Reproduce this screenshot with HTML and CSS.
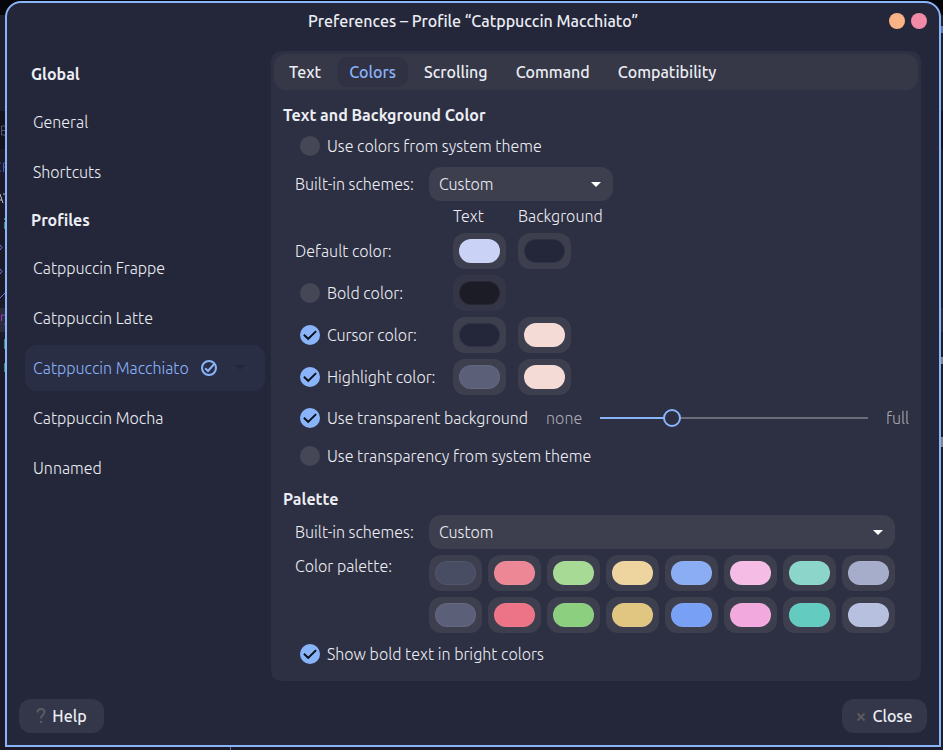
FILE: index.html
```html
<!DOCTYPE html>
<html lang="en">
<head>
<meta charset="utf-8">
<meta name="viewport" content="width=device-width, initial-scale=1">
<title>Preferences</title>
<link rel="stylesheet" href="styles.css">
</head>
<body>
<div class="desktop" aria-hidden="true">
  <span class="strip strip-top"></span>
  <span class="strip strip-bar"></span>
  <span class="strip strip-dark"></span>
  <span class="strip strip-row"></span>
  <svg class="bits" viewBox="0 0 5 280">
    <path d="M5 16H1.500v9H5M1.500 20.500H5" stroke="#55566a"/>
    <path d="M0 53h1m-1 8h1M3.500 62v-9H5M3 57h2" stroke="#4360b4"/>
    <path d="m0 84 3 9m-3-3h2M3 84h2" stroke="#b9bccb"/>
    <path d="M4.500 108v2m0 2v7M4.500 229v10m0 14v9" stroke="#2f8f78"/>
    <path d="m0 135 2 2.500L0 140m0 19 2 2.500L0 164M0 188l5-5" stroke="#6a80c8"/>
    <path d="M1.500 211v-6H5m-1 9h1" stroke="#a03aac"/>
  </svg>
  <span class="tick tick-foot"></span>
  <span class="tick tick-top"></span>
  <span class="tick tick-mid"></span>
  <span class="tick tick-right"></span>
</div>
<main class="window">
  <header class="titlebar">
    <h1 class="title">Preferences – Profile “Catppuccin Macchiato”</h1>
    <div class="controls">
      <button class="dot dot-min" type="button" aria-label="Minimize"></button>
      <button class="dot dot-close" type="button" aria-label="Close window"></button>
    </div>
  </header>

  <div class="body">
    <nav class="sidebar">
      <h2 class="side-heading">Global</h2>
      <a class="side-item" href="#general">General</a>
      <a class="side-item" href="#shortcuts">Shortcuts</a>
      <h2 class="side-heading">Profiles</h2>
      <a class="side-item" href="#frappe">Catppuccin Frappe</a>
      <a class="side-item" href="#latte">Catppuccin Latte</a>
      <a class="side-item selected" href="#macchiato">Catppuccin Macchiato
        <svg class="default-mark" viewBox="0 0 16 16"><circle cx="8" cy="8" r="7"/><path d="M4.2 8.2 7 11l6.2-7"/></svg>
        <svg class="more" viewBox="0 0 10 6"><path d="M0 0h10L5 5z"/></svg>
      </a>
      <a class="side-item" href="#mocha">Catppuccin Mocha</a>
      <a class="side-item" href="#unnamed">Unnamed</a>
    </nav>

    <section class="panel">
      <div class="tabs" role="tablist">
        <button class="tab" role="tab" type="button">Text</button>
        <button class="tab active" role="tab" type="button" aria-selected="true">Colors</button>
        <button class="tab" role="tab" type="button">Scrolling</button>
        <button class="tab" role="tab" type="button">Command</button>
        <button class="tab" role="tab" type="button">Compatibility</button>
      </div>

      <div class="page">
        <h2 class="section">Text and Background Color</h2>
        <label class="check"><input type="checkbox">Use colors from system theme</label>
        <div class="field">
          <label class="name" for="scheme">Built-in schemes:</label>
          <span class="combo combo-short"><select id="scheme"><option>Custom</option></select></span>
        </div>
        <div class="colors">
          <span></span><span class="col">Text</span><span class="col">Background</span>
          <span class="name">Default color:</span>
          <input class="swatch" type="color" value="#cad3f5" aria-label="Default text color">
          <input class="swatch" type="color" value="#24273a" aria-label="Default background color">
          <label class="check"><input type="checkbox">Bold color:</label>
          <input class="swatch off" type="color" value="#1c1c26" aria-label="Bold text color" disabled>
          <span></span>
          <label class="check"><input type="checkbox" checked>Cursor color:</label>
          <input class="swatch" type="color" value="#24273a" aria-label="Cursor text color">
          <input class="swatch" type="color" value="#f4dbd6" aria-label="Cursor background color">
          <label class="check"><input type="checkbox" checked>Highlight color:</label>
          <input class="swatch" type="color" value="#5b6078" aria-label="Highlight text color">
          <input class="swatch" type="color" value="#f4dbd6" aria-label="Highlight background color">
        </div>
        <div class="transparency">
          <label class="check"><input type="checkbox" checked>Use transparent background</label>
          <span class="dim">none</span>
          <input class="slider" type="range" min="0" max="100" value="25" aria-label="Background transparency">
          <span class="dim">full</span>
        </div>
        <label class="check"><input type="checkbox">Use transparency from system theme</label>

        <h2 class="section section-palette">Palette</h2>
        <div class="palette-grid">
          <label class="name" for="palette">Built-in schemes:</label>
          <span class="combo"><select id="palette"><option>Custom</option></select></span>
          <span class="name name-top">Color palette:</span>
          <div class="palette">
            <input class="swatch" type="color" value="#494d64" aria-label="Color 0">
            <input class="swatch" type="color" value="#ed8796" aria-label="Color 1">
            <input class="swatch" type="color" value="#a6da95" aria-label="Color 2">
            <input class="swatch" type="color" value="#eed49f" aria-label="Color 3">
            <input class="swatch" type="color" value="#8aadf4" aria-label="Color 4">
            <input class="swatch" type="color" value="#f5bde6" aria-label="Color 5">
            <input class="swatch" type="color" value="#8bd5ca" aria-label="Color 6">
            <input class="swatch" type="color" value="#a5adcb" aria-label="Color 7">
            <input class="swatch" type="color" value="#5b6078" aria-label="Color 8">
            <input class="swatch" type="color" value="#ec7486" aria-label="Color 9">
            <input class="swatch" type="color" value="#8ccf7f" aria-label="Color 10">
            <input class="swatch" type="color" value="#e1c682" aria-label="Color 11">
            <input class="swatch" type="color" value="#78a1f6" aria-label="Color 12">
            <input class="swatch" type="color" value="#f2a9dd" aria-label="Color 13">
            <input class="swatch" type="color" value="#63cbc0" aria-label="Color 14">
            <input class="swatch" type="color" value="#b8c0e0" aria-label="Color 15">
          </div>
        </div>
        <label class="check bright-check"><input type="checkbox" checked>Show bold text in bright colors</label>
      </div>
    </section>
  </div>

  <footer class="actions">
    <button class="action" type="button"><svg class="action-icon" viewBox="0 0 10 16"><path d="M1.5 4.5V4q0-3 3.5-3t3.5 3q0 2-2 3.300Q5 8.500 5 10.500"/><path d="M4 13h2v2H4z" class="solid"/></svg>Help</button>
    <button class="action" type="button"><svg class="action-icon" viewBox="0 0 10 16"><path d="m1.500 5.500 7 7m0-7-7 7"/></svg>Close</button>
  </footer>
</main>
</body>
</html>
```
FILE: styles.css
```css
* { box-sizing: border-box; }

body {
  margin: 0;
  background: #1c1a28;
  color: #eceef4;
  font: 300 16px/22px Ubuntu, "Open Sans", sans-serif;
}

button, select, input { font: inherit; color: inherit; margin: 0; }

/* Desktop showing around the window edges */
.desktop { position: absolute; inset: 0; overflow: hidden; background: linear-gradient(90deg, #1c1a28 60%, #1b1c2c); }
.strip { position: absolute; left: 0; width: 100%; }
.strip-top { top: 0; height: 15px; background: #07070b; }
.strip-bar { top: 15px; height: 96px; background: #1e2030; }
.strip-dark { top: 111px; height: 38px; background: #15121d; }
.strip-row { top: 308px; height: 24px; background: #2c2a3d; }
.bits { position: absolute; top: 110px; left: 0; width: 5px; height: 280px; fill: none; }
.tick { position: absolute; width: 2px; height: 7px; right: 0; background: #83838f; }
.tick-foot { top: 747px; left: 230px; width: 1px; background: #5b79b8; }
.tick-top { top: 26px; background: #5878b0; }
.tick-mid { top: 357px; }
.tick-right { top: 437px; height: 10px; }

.window {
  position: relative;
  display: flex;
  flex-direction: column;
  min-height: calc(100vh - 4px);
  margin: 1px 2px 3px 5px;
  border: 2px solid #8ab4fa;
  border-radius: 16px 16px 0 0;
  background: #24273a;
}

.titlebar { position: relative; display: flex; justify-content: center; align-items: center; height: 36px; }
.title { margin: 0; font-size: 16px; font-weight: 500; }
.controls { position: absolute; right: 12px; display: flex; gap: 6px; }
.dot { width: 16px; height: 16px; padding: 0; border: 0; border-radius: 50%; }
.dot-min { background: #fab387; }
.dot-close { background: #f38ba8; }

.body { display: flex; flex: 1; gap: 6px; padding: 12px 18px 0; }

.sidebar { display: flex; flex-direction: column; flex: 0 0 240px; gap: 4px; padding-top: 2px; }
.side-heading { margin: -4px 0; padding-left: 6px; font-size: 16px; font-weight: 700; line-height: 50px; }
.side-item {
  display: flex;
  align-items: center;
  height: 46px;
  padding-left: 8px;
  border-radius: 12px;
  color: inherit;
  text-decoration: none;
}
.side-item.selected { background: #2a2e44; color: #8ab4fa; }
.default-mark { width: 16px; margin-left: 12px; fill: none; stroke: #8ab4fa; stroke-width: 2; }
.more { width: 10px; margin-left: 18px; fill: #24273a; }

.panel { flex: 1; min-width: 0; padding: 3px; border-radius: 10px; background: #2d2f42; }

.tabs { display: flex; gap: 4px; padding: 3px; border-radius: 12px; background: #363848; }
.tab { height: 30px; padding: 0 12px; border: 0; border-radius: 10px; background: none; font-weight: 500; }
.tab.active { background: #303142; color: #8ab4fa; }

.page { padding: 14px 23px 13px 21px; }
.section { margin: 0 0 0 -12px; font-size: 16px; font-weight: 700; }
.section-palette { margin-top: 21px; margin-bottom: 5px; }

.check { display: flex; align-items: center; gap: 7px; padding-left: 5px; white-space: nowrap; }
.section + .check { margin: 9px 0 10px; }
.check input {
  appearance: none;
  width: 20px;
  height: 20px;
  border-radius: 50%;
  background: #454757;
}
.check input:checked { background: #8ab4fa; }
.check input:checked::before {
  content: "";
  display: block;
  width: 20px;
  height: 20px;
  background: #0c0e18;
  clip-path: polygon(16% 52%, 23% 45%, 41% 62%, 77% 27%, 84% 34%, 41% 76%);
}

.field { display: flex; align-items: center; }
.name { width: 134px; flex: none; white-space: nowrap; }
.combo { position: relative; display: block; }
.combo-short { width: 184px; }
.combo select {
  appearance: none;
  width: 100%;
  height: 34px;
  padding: 0 10px;
  border: 0;
  border-radius: 12px;
  background: #3d3f4f;
}
.combo::after {
  content: "";
  position: absolute;
  top: 15px;
  right: 12px;
  border: solid transparent;
  border-width: 5px 5px 0;
  border-top-color: #fff;
  pointer-events: none;
}

.colors {
  display: grid;
  grid-template-columns: 146px 53px 53px;
  gap: 6px 12px;
  align-items: center;
  margin-top: 4px;
}
.col { white-space: nowrap; }

.swatch {
  appearance: none;
  width: 53px;
  height: 36px;
  padding: 6px;
  border: 0;
  border-radius: 12px;
  background: #3d3f4f;
}
.swatch.off { background: #343647; }
.swatch::-webkit-color-swatch-wrapper { padding: 0; }
.swatch::-webkit-color-swatch { border: 1px solid rgb(255 255 255 / 5%); border-radius: 12px; }

.transparency { display: flex; align-items: center; gap: 18px; margin: 12px -14px 16px 0; }
.dim { color: #a9aab3; }
.slider { appearance: none; flex: 1; min-width: 60px; height: 18px; background: none; }
.slider::-webkit-slider-runnable-track {
  height: 2px;
  background: linear-gradient(90deg, #8ab4fa 27%, #6a6c78 27%);
}
.slider::-webkit-slider-thumb {
  appearance: none;
  width: 18px;
  height: 18px;
  margin-top: -8px;
  border: 2px solid #8ab4fa;
  border-radius: 50%;
  background: #2d2f42;
}

.palette-grid { display: grid; grid-template-columns: 134px auto; justify-content: start; row-gap: 6px; align-items: center; }
.name-top { align-self: start; }
.palette { display: grid; grid-template-columns: repeat(8, 53px); gap: 6px; }
.bright-check { margin-top: 10px; }

.actions { display: flex; justify-content: space-between; padding: 18px 12px 12px; }
.action {
  display: flex;
  align-items: center;
  justify-content: center;
  gap: 6px;
  min-width: 85px;
  height: 34px;
  padding: 0 12px;
  border: 0;
  border-radius: 12px;
  background: #343649;
  font-weight: 500;
}
.action-icon { width: 10px; fill: none; stroke: #5a5b60; stroke-width: 2; }
.action-icon .solid { fill: #5a5b60; stroke: none; }
```
